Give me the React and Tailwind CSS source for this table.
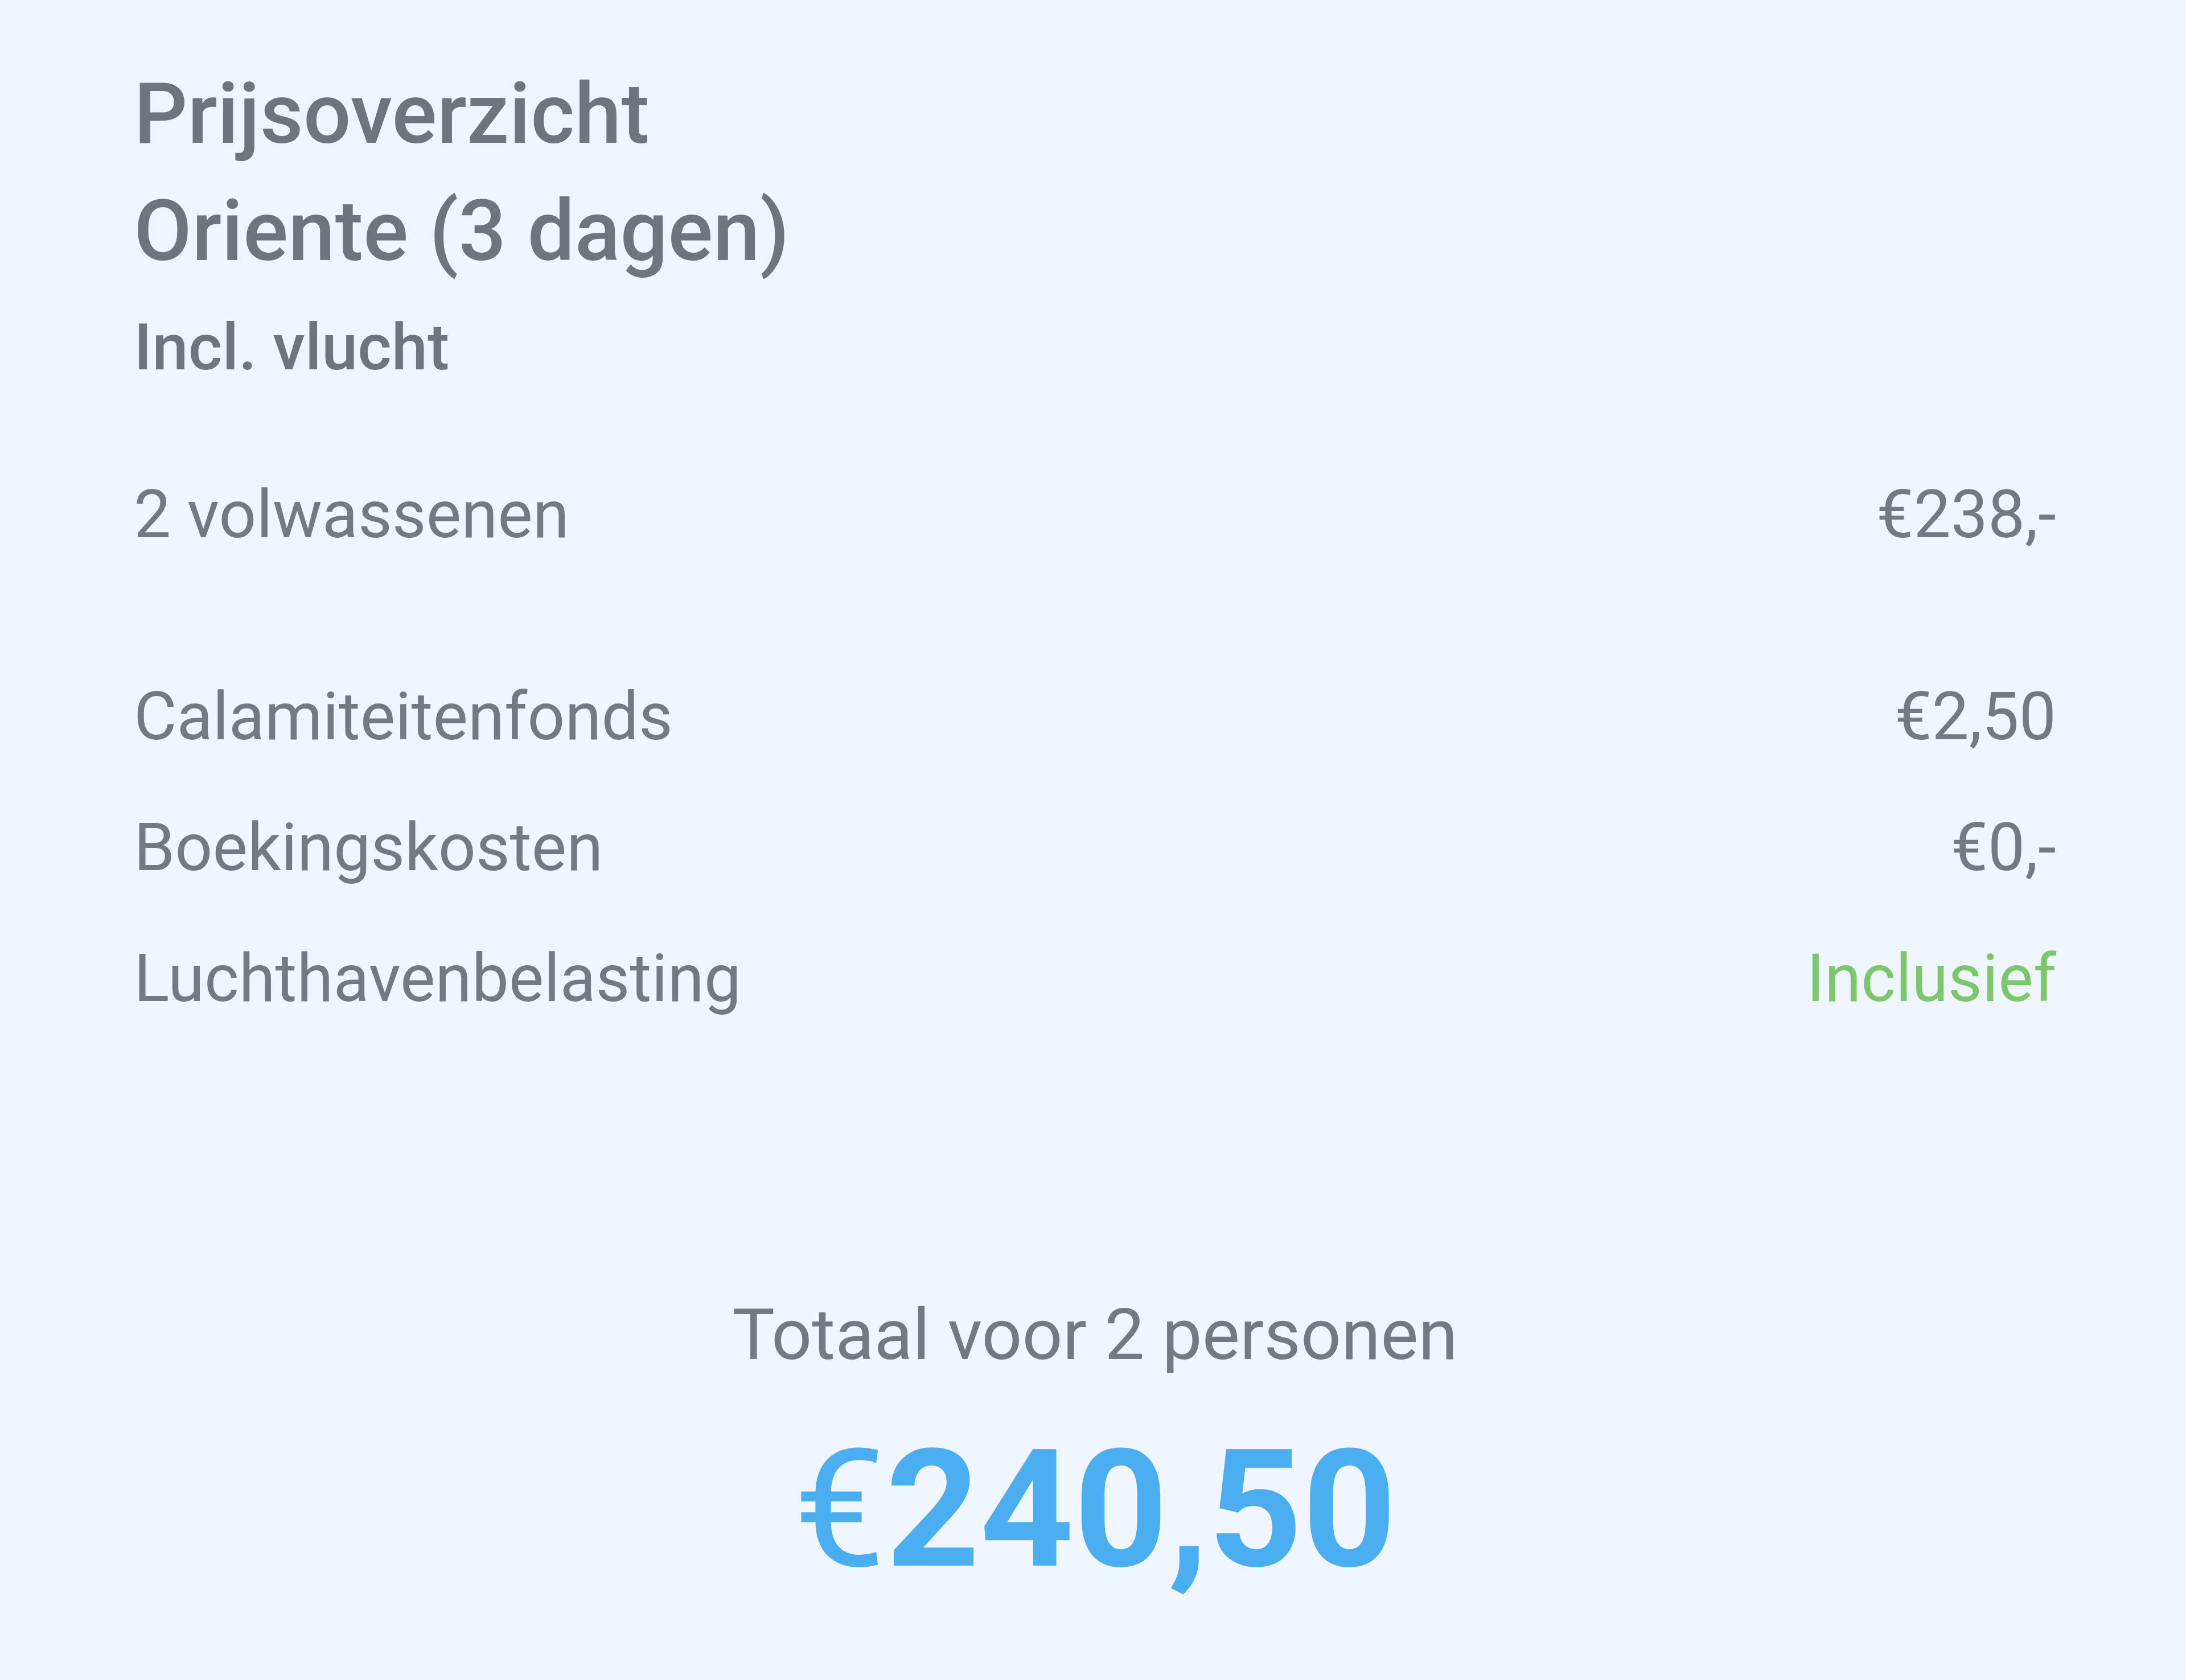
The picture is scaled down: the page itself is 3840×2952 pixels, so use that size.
export default function App() {
    const rows = [
        {label: '2 volwassenen', value: '€238,-'},
        {label: 'Calamiteitenfonds', value: '€2,50', gap: true},
        {label: 'Boekingskosten', value: '€0,-'},
        {label: 'Luchthavenbelasting', value: 'Inclusief', green: true},
    ]

    return (
        <div className="min-h-screen bg-[#eff6ff] text-[#737a84] font-['Roboto',sans-serif]">
            <div className="pl-[235px] pr-[228px] pt-[98px]">
                <h1 className="text-[148px] leading-[206px] font-medium text-[#6e7580]">
                    Prijsoverzicht
                    <br/>
                    Oriente (3 dagen)
                </h1>
                <p className="mt-[9px] text-[114px] leading-[183px] font-medium text-[#6e7580]">Incl. vlucht</p>

                <div className="mt-[122px] flex flex-col">
                    {rows.map((r) => (
                        <div
                            key={r.label}
                            className={`flex justify-between items-center text-[116px] leading-[160px] font-normal ${r.gap ? 'mt-[195px]' : 'mt-[70px] first:mt-0'}`}
                        >
                            <span>{r.label}</span>
                            <span className={r.green ? 'text-[#7cc66b]' : ''}>{r.value}</span>
                        </div>
                    ))}
                </div>

                <div className="mt-[462px] flex flex-col items-center">
                    <p className="text-[125px] leading-[170px] font-normal">Totaal voor 2 personen</p>
                    <p className="mt-[78px] text-[288px] leading-none text-[#4aaef0]">
                        <span className="font-normal">€</span>
                        <span className="font-bold">240,50</span>
                    </p>
                </div>
            </div>
        </div>
    )
}
